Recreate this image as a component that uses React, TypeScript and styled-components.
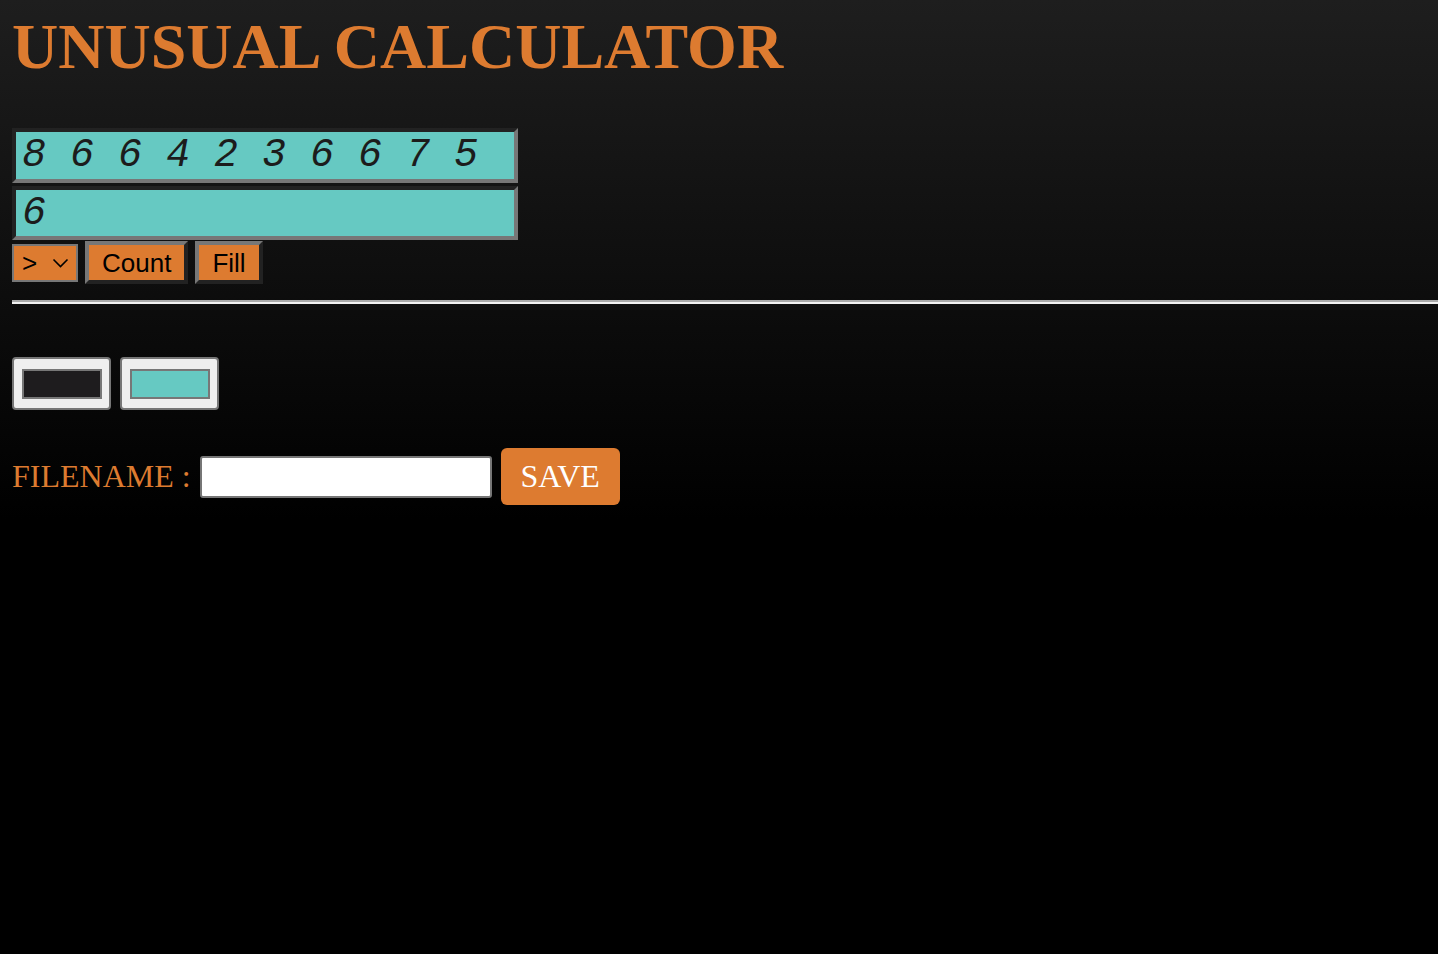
import React, { useState } from "react";
import styled, { createGlobalStyle } from "styled-components";

const GlobalStyle = createGlobalStyle`
  html, body {
    margin: 0;
    padding: 0;
    background: #000;
  }
  * { box-sizing: border-box; }
`;

const ORANGE = "#dd7b30";
const TEAL = "#66c9c2";

const Page = styled.div`
  background: linear-gradient(#1e1e1e, #000);
  padding: 10px 0 15px 12px;
  font-family: "Liberation Serif", "Times New Roman", serif;
`;

const Title = styled.h1`
  margin: 0 0 44px 0;
  font-family: "Liberation Serif", "Times New Roman", serif;
  font-weight: bold;
  font-size: 64px;
  line-height: 74px;
  color: ${ORANGE};
  white-space: nowrap;
`;

const Display = styled.div<{ $gap: number; $h: number }>`
  width: 506px;
  height: ${(p) => p.$h}px;
  margin-bottom: ${(p) => p.$gap}px;
  border: 4px inset #777;
  background: ${TEAL};
  display: flex;
  align-items: center;
  padding: 0 6px;
  font-family: "Liberation Mono", "Courier New", monospace;
  font-style: italic;
  font-size: 40px;
  color: #1c1c1c;
  white-space: pre;
`;

const Controls = styled.div`
  display: flex;
  align-items: center;
  gap: 7px;
`;

const SelectWrap = styled.div`
  position: relative;
  width: 66px;
  height: 38px;
`;

const Select = styled.select`
  appearance: none;
  -webkit-appearance: none;
  width: 100%;
  height: 100%;
  border: 2px solid #777;
  border-radius: 0;
  background: ${ORANGE};
  color: #000;
  font-family: "Liberation Sans", Arial, sans-serif;
  font-size: 26px;
  padding: 0 0 0 8px;
  margin: 0;
  outline: none;
`;

const Chevron = styled.svg`
  position: absolute;
  left: 40px;
  top: 14px;
  width: 17px;
  height: 10px;
  pointer-events: none;
`;

const ActionButton = styled.button`
  height: 43px;
  padding: 0 13px;
  border: 4px outset #777;
  background: ${ORANGE};
  color: #000;
  font-family: "Liberation Sans", Arial, sans-serif;
  font-size: 26px;
  line-height: 1;
  margin: 0;
`;

const Divider = styled.div`
  margin: 16px 0 53px 0;
  border-top: 2px solid #a9a9a9;
  border-bottom: 2px solid #f0f0f0;
`;

const Swatches = styled.div`
  display: flex;
  gap: 9px;
  margin-bottom: 38px;
`;

const SwatchButton = styled.div`
  width: 99px;
  height: 53px;
  background: #efefef;
  border: 2px solid #767676;
  border-radius: 4px;
  display: flex;
  align-items: center;
  justify-content: center;
`;

const SwatchColor = styled.div<{ $color: string }>`
  width: 80px;
  height: 30px;
  border: 2px solid #777;
  background: ${(p) => p.$color};
`;

const FileRow = styled.div`
  display: flex;
  align-items: center;
  gap: 9px;
`;

const FileLabel = styled.label`
  font-family: "Liberation Serif", "Times New Roman", serif;
  font-size: 32px;
  color: ${ORANGE};
  white-space: pre;
`;

const FileInput = styled.input`
  width: 292px;
  height: 42px;
  border: 2px solid #767676;
  border-radius: 3px;
  background: #fff;
  margin: 0;
  padding: 0 6px;
  outline: none;
`;

const SaveButton = styled.button`
  width: 119px;
  height: 57px;
  border: none;
  border-radius: 6px;
  background: ${ORANGE};
  color: #fff;
  font-family: "Liberation Serif", "Times New Roman", serif;
  font-size: 32px;
  padding: 0;
  margin: 0;
`;

export default function App() {
  const [op, setOp] = useState(">");
  const [name, setName] = useState("");
  return (
    <>
      <GlobalStyle />
      <Page>
        <Title>UNUSUAL CALCULATOR</Title>
        <Display $gap={3} $h={55}>8 6 6 4 2 3 6 6 7 5</Display>
        <Display $gap={1} $h={54}>6</Display>
        <Controls>
          <SelectWrap>
            <Select value={op} onChange={(e) => setOp(e.target.value)}>
              <option value=">">&gt;</option>
              <option value="<">&lt;</option>
              <option value="=">=</option>
            </Select>
            <Chevron viewBox="0 0 17 10">
              <path d="M1.5 1.5 L8.5 8.5 L15.5 1.5" fill="none" stroke="#000" strokeWidth="1.6" />
            </Chevron>
          </SelectWrap>
          <ActionButton>Count</ActionButton>
          <ActionButton>Fill</ActionButton>
        </Controls>
        <Divider />
        <Swatches>
          <SwatchButton>
            <SwatchColor $color="#1e1c1e" />
          </SwatchButton>
          <SwatchButton>
            <SwatchColor $color={TEAL} />
          </SwatchButton>
        </Swatches>
        <FileRow>
          <FileLabel>FILENAME :</FileLabel>
          <FileInput value={name} onChange={(e) => setName(e.target.value)} />
          <SaveButton>SAVE</SaveButton>
        </FileRow>
      </Page>
    </>
  );
}
